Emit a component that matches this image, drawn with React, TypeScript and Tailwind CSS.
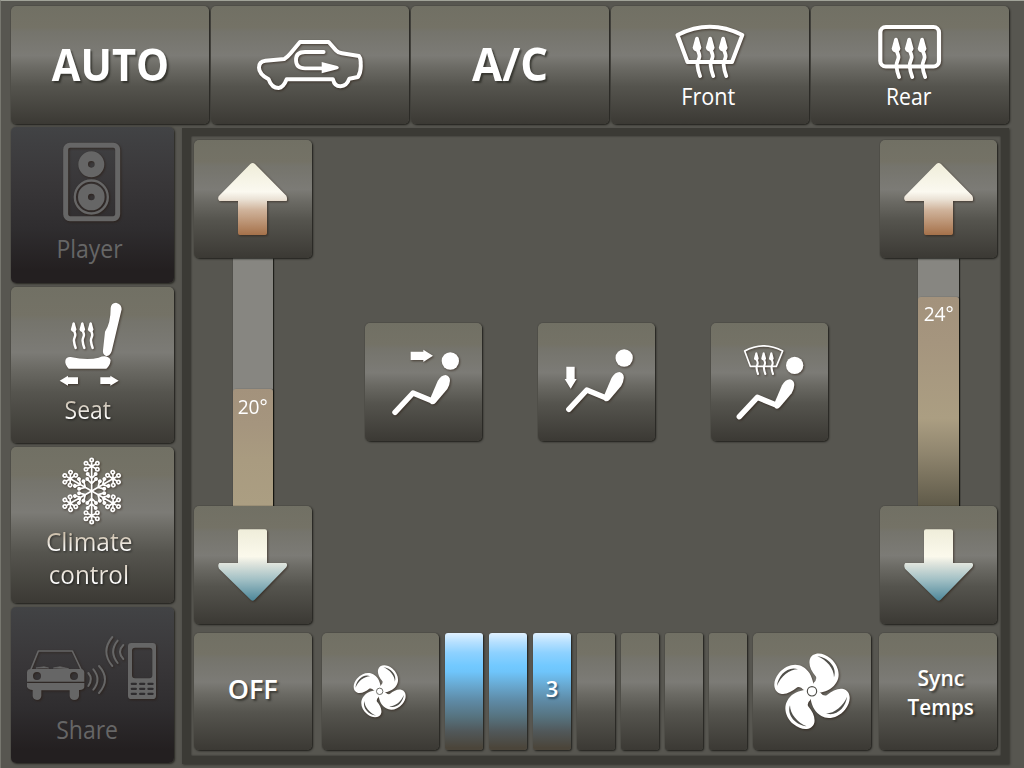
import React from "react";
import { clsx } from "clsx";

const FACE =
  "bg-[linear-gradient(180deg,#717064_0%,#747266_18%,#75746c_22%,#7c7b76_42%,#6a6963_53%,#55544e_68%,#3b3934_100%)] shadow-[1px_1px_2px_rgba(20,20,16,0.85),0_0_1px_rgba(30,30,26,0.5)]";
const DARK_FACE =
  "bg-[linear-gradient(180deg,#424345_0%,#393739_35%,#2f2d2f_65%,#231f20_92%)] shadow-[1px_1px_2px_rgba(20,20,16,0.7),0_0_1px_rgba(30,30,26,0.5)]";
const ICON_SHADOW = "drop-shadow-[1.5px_1.5px_1px_rgba(40,25,15,0.6)]";

type BtnProps = { className: string; face?: string; children?: React.ReactNode };

function Btn({ className, face = FACE, children }: BtnProps) {
  return (
    <button type="button" className={clsx("flex shrink-0 flex-col items-start justify-start rounded-[5px]", face, className)}>
      {children}
    </button>
  );
}

type IconProps = { box: string; className: string; children: React.ReactNode };

function Icon({ box, className, children }: IconProps) {
  return (
    <svg viewBox={box} className={clsx("block shrink-0 overflow-visible", ICON_SHADOW, className)} fill="currentColor">
      {children}
    </svg>
  );
}

function Label({ className, children }: { className: string; children: React.ReactNode }) {
  return <span className={clsx("block w-full text-center whitespace-nowrap", className)}>{children}</span>;
}

function HeatArrow({ x, y, s = 1 }: { x: number; y: number; s?: number }) {
  return (
    <g transform={`translate(${x} ${y}) scale(${s})`}>
      <path d="M0 0c-1.700 0-1.900 1.600-2.300 3.400l-2.100 7.600c.8 2.600 2 3.600 4.400 3.600s3.600-1 4.400-3.600l-2.100-7.600C1.900 1.600 1.700 0 0 0z" />
      <path
        d="M0.300 12c.8 3 2.300 4.800 2.200 7.600s-2.400 5.200-2.100 8.600 1.300 7.600 2.700 11.200"
        fill="none"
        stroke="currentColor"
        strokeWidth="3.800"
        strokeLinecap="round"
      />
    </g>
  );
}

function Person({ x, y }: { x: number; y: number }) {
  return (
    <g transform={`translate(${x} ${y})`}>
      <circle cx="271" cy="153" r="26" />
      <path d="M105 307L159 249L217 273" fill="none" stroke="currentColor" strokeWidth="16.500" strokeLinecap="round" strokeLinejoin="round" />
      <path d="M210 267L233 213Q243 195 257 195Q270 198 270 212Q269 226 262 237L227 278Q220 286 212 281Z" />
    </g>
  );
}

function Fan({ box, className, transform }: { box: string; className: string; transform: string }) {
  return (
    <Icon box={box} className={className}>
      <g transform={transform}>
        {[0, 90, 180, 270].map((a) => (
          <g key={a} transform={`rotate(${a})`}>
            <path d="M0 0L5 -26Q15 -34 12 -44C-3 -62 -10 -78 -7 -94C-1 -117 30 -120 55 -99C80 -78 86 -48 74 -28C64 -10 48 -1 24 4Z" />
            <path d="M16 -105C48 -102 77 -72 66 -42C66 -68 44 -94 16 -105Z" fill="#504f4a" />
          </g>
        ))}
        <circle r="24" />
        <circle r="14" fill="none" stroke="#504f4a" strokeWidth="3.500" />
      </g>
    </Icon>
  );
}

function UpArrow() {
  return (
    <Icon box="108 120 222 234" className="ml-[22px] mt-[19.500px] h-[78px] w-[74px]">
      <defs>
        <linearGradient id="warm" gradientUnits="userSpaceOnUse" x1="0" x2="0" y1="129" y2="345">
          <stop offset="0" stopColor="#efedd9" />
          <stop offset="0.400" stopColor="#fbf9f0" />
          <stop offset="0.500" stopColor="#ebe3d7" />
          <stop offset="0.650" stopColor="#d0b49c" />
          <stop offset="1" stopColor="#a5714a" />
        </linearGradient>
      </defs>
      <path fill="url(#warm)" d="M211 132Q218 126 225 132L319 227Q323 236 320 243H261V340Q261 345 256 345H179Q174 345 174 340V243H118Q112 238 116 229Z" />
    </Icon>
  );
}

function DownArrow() {
  return (
    <Icon box="108 441 222 234" className="ml-[22px] mt-[20.500px] h-[78px] w-[74px]">
      <defs>
        <linearGradient id="cold" gradientUnits="userSpaceOnUse" x1="0" x2="0" y1="448" y2="663">
          <stop offset="0" stopColor="#efedda" />
          <stop offset="0.380" stopColor="#fbf9ec" />
          <stop offset="0.480" stopColor="#dfe4dd" />
          <stop offset="0.700" stopColor="#a2c0c5" />
          <stop offset="1" stopColor="#4c8699" />
        </linearGradient>
      </defs>
      <path fill="url(#cold)" d="M174 454Q174 448 180 448H255Q261 448 261 454V549H318Q324 553 319 562L224 659Q218 665 212 659L117 566Q112 556 118 549H174Z" />
    </Icon>
  );
}

function TempColumn({ value, fill }: { value: string; fill: string }) {
  return (
    <div className="flex w-[117.500px] flex-col">
      <Btn className="relative z-10 h-[117.500px] w-full">
        <UpArrow />
      </Btn>
      <div className="ml-[38.500px] flex h-[248.500px] w-[40.500px] flex-col justify-end bg-[#878681] shadow-[1px_1px_1px_rgba(15,15,10,0.75),0_0_1px_rgba(30,30,26,0.5)]">
        <div className={clsx("rounded-t-[3px] shadow-[1px_0_1px_rgba(15,15,10,0.6)]", fill)}>
          <Label className="text-[20px] leading-[24px]">
            <span className="inline-block scale-x-[0.960]">{value}</span>
          </Label>
        </div>
      </div>
      <Btn className="relative z-10 h-[117.500px] w-full">
        <DownArrow />
      </Btn>
    </div>
  );
}

function SpeedBar({ lit, label }: { lit: boolean; label?: string }) {
  return (
    <div
      className={clsx(
        "h-[117.500px] w-[38px] shrink-0 rounded-[3px]",
        lit
          ? "bg-[linear-gradient(180deg,#e0f1ff_0%,#b5e0ff_8%,#8dd1ff_17%,#72c9ff_28%,#6fc5fb_33%,#68a8d0_45%,#5e8aa5_58%,#56727e_72%,#51585a_84%,#4b453a_98%)] shadow-[1px_1px_2px_rgba(20,20,16,0.85)]"
          : FACE
      )}
    >
      {label && (
        <Label className="pt-[41.500px] text-[22px] leading-[28px] font-semibold [text-shadow:1.5px_1.5px_2px_rgba(20,40,60,0.6)]">
          {label}
        </Label>
      )}
    </div>
  );
}

const SNOW_ARM = (
  <>
    <path d="M0 0V-86M0 -74L-13 -81M0 -74L13 -81M0 -74L-13 -67M0 -74L13 -67M0 -38L-12 -50M0 -38L12 -50M0 -22L-15 -37M0 -22L15 -37" fill="none" stroke="currentColor" strokeWidth="5" />
    <g fill="none" stroke="currentColor" strokeWidth="5">
      <circle cy="-93" r="5" />
      <circle cx="-17" cy="-83" r="5" />
      <circle cx="17" cy="-83" r="5" />
      <circle cx="-17" cy="-65" r="5" />
      <circle cx="17" cy="-65" r="5" />
    </g>
    <circle cy="-74" r="5" />
    <circle cx="-12" cy="-51" r="6" />
    <circle cx="12" cy="-51" r="6" />
    <circle cx="-13" cy="-36" r="6" />
    <circle cx="13" cy="-36" r="6" />
  </>
);

const TINTED =
  "bg-clip-text text-transparent [filter:drop-shadow(1px_1px_1px_rgba(0,0,0,0.55))]";

export default function App() {
  return (
    <div className="flex h-[768px] w-[1024px] flex-col overflow-hidden border-t border-l border-t-[#a1a399] border-l-[#77776f] bg-[#575650] font-['Open_Sans','Noto_Sans',sans-serif] text-white">
      <header className="ml-[10px] mt-[5px] flex gap-[2px]">
        <Btn className="h-[118px] w-[198px]">
          <Label className="mt-[33.500px] text-[45px] leading-[48px] font-bold [text-shadow:2px_2px_2px_rgba(30,30,25,0.65)]">
            <span className="inline-block scale-x-[0.925]">AUTO</span>
          </Label>
        </Btn>
        <Btn className="h-[118px] w-[198px]">
          <Icon box="765 114 330 168" className="ml-[44px] mt-[32px] h-[56px] w-[110px]">
            <path
              d="M777 203Q777 184 796 182L853 177Q862 172 872 160L900 126H986L1008 151Q1014 158 1026 160L1077 168Q1083 175 1082 190Q1084 215 1074 231L1048 236Q1040 258 1022 259Q1004 260 999 238H860Q850 263 836 264Q815 264 806 238Q777 222 777 203Z"
              fill="none"
              stroke="currentColor"
              strokeWidth="12"
              strokeLinejoin="round"
            />
            <path d="M971 156H915C895 156 888 166 888 180C888 198 899 205 915 205H968" fill="none" stroke="currentColor" strokeWidth="11.500" strokeLinecap="round" />
            <path d="M965 186L1012 198Q1021 203 1012 208L965 220Z" />
          </Icon>
        </Btn>
        <Btn className="h-[118px] w-[198px]">
          <Label className="mt-[33px] text-[46px] leading-[48px] font-bold [text-shadow:2px_2px_2px_rgba(30,30,25,0.65)]">
            <span className="inline-block scale-x-[0.950]">A/C</span>
          </Label>
        </Btn>
        <Btn className="h-[118px] w-[198px]">
          <Icon box="670 22 80 60" className="ml-[59px] mt-[16px] h-[60px] w-[80px]">
            <path d="M687.500 62L677.500 35Q709.800 18.500 742.300 35L732 62Z" fill="none" stroke="currentColor" strokeWidth="4" strokeLinejoin="round" />
            <HeatArrow x={697} y={36.7} />
            <HeatArrow x={710.2} y={36.7} />
            <HeatArrow x={723.2} y={36.7} />
          </Icon>
          <Label className="mt-[-0.200px] text-[23px] leading-[28px]">
            <span className="inline-block -translate-x-[1.500px] scale-x-[0.940]">Front</span>
          </Label>
        </Btn>
        <Btn className="h-[118px] w-[198px]">
          <Icon box="870 22 80 60" className="ml-[59px] mt-[16px] h-[60px] w-[80px]">
            <rect x="880.300" y="27" width="58.700" height="39.500" rx="5.500" fill="none" stroke="currentColor" strokeWidth="4.200" />
            <HeatArrow x={896} y={37.7} />
            <HeatArrow x={909.2} y={37.7} />
            <HeatArrow x={922.1} y={37.7} />
          </Icon>
          <Label className="mt-[-0.200px] text-[23px] leading-[28px]">
            <span className="inline-block -translate-x-[1px] scale-x-[0.920]">Rear</span>
          </Label>
        </Btn>
      </header>

      <main className="ml-[10px] mt-[3px] flex">
        <nav className="flex w-[163px] flex-col gap-[4px]">
          <Btn face={DARK_FACE} className="h-[156px] w-[163px] text-[#666]">
            <Icon box="186 60 180 252" className="ml-[51px] mt-[13px] h-[84px] w-[60px]">
              <rect x="197" y="76" width="156" height="220" rx="13" fill="none" stroke="currentColor" strokeWidth="15" />
              <circle cx="274" cy="133" r="24.500" fill="none" stroke="currentColor" strokeWidth="29" />
              <circle cx="274" cy="231" r="25" fill="none" stroke="currentColor" strokeWidth="30" />
              <circle cx="274" cy="231" r="49.500" fill="none" stroke="currentColor" strokeWidth="7" />
            </Icon>
            <Label className="mt-[7.500px] text-[25px] leading-[32px]">
              <span className="inline-block -translate-x-[2.500px] scale-x-[0.920]">Player</span>
            </Label>
          </Btn>
          <Btn className="h-[156px] w-[163px]">
            <Icon box="174 60 198 264" className="ml-[47px] mt-[13px] h-[88px] w-[66px]">
              <path d="M332 84Q333 69 348 68Q365 72 365 88L335 214Q330 229 318 228Q307 224 309 210L315 155Q332 130 332 84Z" />
              <path d="M196 242Q198 230 212 231Q262 242 296 233Q322 222 332 240Q331 256 319 266H206Q194 252 196 242Z" />
              <HeatArrow x={221} y={127} s={1.95} />
              <HeatArrow x={247} y={127} s={1.95} />
              <HeatArrow x={272} y={127} s={1.95} />
              <path d="M179 302L204 287V292H234V312H204V317ZM356 302L331 287V292H301V312H331V317Z" />
            </Icon>
            <Label className="mt-[4.500px] text-[25px] leading-[32px]">
              <span className={clsx("inline-block -translate-x-[4.500px] scale-x-[0.920] bg-[linear-gradient(180deg,#cfc6b8_35%,#fff_80%)]", TINTED)}>
                Seat
              </span>
            </Label>
          </Btn>
          <Btn className="h-[156px] w-[163px]">
            <Icon box="180 48 192 210" className="ml-[49px] mt-[9px] h-[70px] w-[64px]">
              <g transform="translate(275 153)">
                {[0, 60, 120, 180, 240, 300].map((a) => (
                  <g key={a} transform={`rotate(${a})`}>{SNOW_ARM}</g>
                ))}
              </g>
            </Icon>
            <Label className="mt-[-1px] text-[25px] leading-[32.500px]">
              <span className={clsx("inline-block -translate-x-[3px] scale-x-[0.980] bg-[linear-gradient(180deg,#cfc2ae_30%,#fff_78%)]", TINTED)}>Climate</span>
            </Label>
            <Label className="text-[25px] leading-[32.500px]">
              <span className={clsx("inline-block -translate-x-[3.500px] scale-x-[0.970] bg-[linear-gradient(180deg,#dcd2c3_30%,#fff_78%)]", TINTED)}>control</span>
            </Label>
          </Btn>
          <Btn face={DARK_FACE} className="h-[156px] w-[163px] text-[#666]">
            <Icon box="78 102 396 204" className="ml-[15px] mt-[27px] h-[68px] w-[132px]">
              <path d="M92 210L115 153H217L244 210" fill="none" stroke="currentColor" strokeWidth="5" strokeLinejoin="round" />
              <path d="M108 204L146 204L132 200ZM160 204L206 206L180 200Z" stroke="currentColor" strokeWidth="2" />
              <path
                fillRule="evenodd"
                d="M81 217Q82 207 92 207H243Q252 208 253 217V245H81ZM99 228a12 12 0 1 0 24 0a12 12 0 1 0-24 0M210 228a12 12 0 1 0 24 0a12 12 0 1 0-24 0"
              />
              <path d="M81 249H253V262Q250 270 240 270H237V288Q235 300 223 300Q211 300 209 288V271H124V288Q122 300 111 300Q99 299 98 288V270Q84 268 81 260Z" />
              <g fill="none" stroke="currentColor" strokeWidth="6" strokeLinecap="round">
                <path d="M265 219Q280 237 265 258M280 208Q305 238 280 269M297 198Q333 238 297 279" />
                <path d="M370 135Q350 155 370 177M353 122Q326 155 353 189M337 111Q301 155 337 198" />
              </g>
              <path
                fillRule="evenodd"
                d="M394 129H458Q468 129 468 139V287Q468 297 458 297H394Q384 297 384 287V139Q384 129 394 129ZM405 143Q396 143 396 152V226Q396 235 405 235H448Q457 235 457 226V152Q457 143 448 143Z"
              />
              <g fill="#2f2d2f">
                {[248, 263, 278].map((y) =>
                  [392, 417, 442].map((x) => <rect key={`${x}-${y}`} x={x} y={y} width="19" height="7" rx="3.500" />)
                )}
              </g>
            </Icon>
            <Label className="mt-[10.500px] text-[25px] leading-[32px]">
              <span className="inline-block -translate-x-[5.500px] scale-x-[0.920]">Share</span>
            </Label>
          </Btn>
        </nav>

        <section className="ml-[8px] mt-[0.500px] flex h-[636px] w-[827px] flex-col border-8 border-l-9 border-[#3b3a35] pt-[4.500px] pl-[3px] shadow-[1px_1px_2px_rgba(20,20,16,0.5),inset_0_0_2px_rgba(0,0,0,0.6)]">
          <div className="flex h-[483.500px] items-start">
            <TempColumn value="20°" fill="h-[117.500px] pt-[6.500px] bg-[linear-gradient(180deg,#a3927c_0%,#a5957e_30%,#a99b80_60%,#ab9e82_100%)]" />
            <div className="ml-[53px] mt-[183px] flex gap-[55.500px]">
              <Btn className="h-[117.500px] w-[117.500px]">
                <Icon box="90 111 216 213" className="ml-[25.500px] mt-[23.500px] h-[71px] w-[72px]">
                  <Person x={0} y={0} />
                  <path d="M152 125H190V119L219 137L190 156V150H152Z" />
                </Icon>
              </Btn>
              <Btn className="h-[117.500px] w-[117.500px]">
                <Icon box="612 102 216 210" className="ml-[26.500px] mt-[20.500px] h-[70px] w-[72px]">
                  <Person x={521.5} y={-9} />
                  <path d="M619 170H644V207H650L632 236L614 207H619Z" />
                </Icon>
              </Btn>
              <Btn className="h-[117.500px] w-[117.500px]">
                <Icon box="1128 96 210 240" className="ml-[25.500px] mt-[18.500px] h-[80px] w-[70px]">
                  <Person x={1033} y={13} />
                  <path d="M1171 169L1154 123Q1211 92 1268 123L1249 169Z" fill="none" stroke="currentColor" strokeWidth="5" strokeLinejoin="round" />
                  <HeatArrow x={1189} y={127} s={1.65} />
                  <HeatArrow x={1211} y={127} s={1.65} />
                  <HeatArrow x={1234} y={127} s={1.65} />
                </Icon>
              </Btn>
            </div>
            <div className="ml-[51.500px]">
              <TempColumn value="24°" fill="h-[209.500px] pt-[5.500px] bg-[linear-gradient(180deg,#a3927c_0%,#a5957e_22%,#ab9e82_58%,#8f856e_75%,#5f5a49_100%)]" />
            </div>
          </div>
          <div className="mt-[9px] flex">
            <Btn className="h-[117.500px] w-[117.500px]">
              <Label className="mt-[40px] text-[27px] leading-[32px] font-semibold [text-shadow:2px_2px_2px_rgba(30,30,25,0.6)]">
                <span className="inline-block">OFF</span>
              </Label>
            </Btn>
            <Btn className="ml-[10px] h-[117.500px] w-[117.500px]">
              <Fan box="516 132 165 165" className="ml-[30.500px] mt-[31px] h-[55px] w-[55px]" transform="translate(599 214) scale(0.690)" />
            </Btn>
            <div className="ml-[6px] flex gap-[6px]">
              <SpeedBar lit />
              <SpeedBar lit />
              <SpeedBar lit label="3" />
              <SpeedBar lit={false} />
              <SpeedBar lit={false} />
              <SpeedBar lit={false} />
              <SpeedBar lit={false} />
            </div>
            <Btn className="ml-[6px] h-[117.500px] w-[117.500px]">
              <Fan box="606 93 240 240" className="ml-[18.500px] mt-[18px] h-[80px] w-[80px]" transform="translate(726 214)" />
            </Btn>
            <Btn className="ml-[8.500px] h-[117.500px] w-[117.500px]">
              <Label className="mt-[30.500px] text-[22px] leading-[28.500px] font-semibold [text-shadow:2px_2px_2px_rgba(30,30,25,0.6)]">
                <span className="inline-block translate-x-[3.500px] scale-x-[0.960]">Sync</span>
              </Label>
              <Label className="text-[22px] leading-[28.500px] font-semibold [text-shadow:2px_2px_2px_rgba(30,30,25,0.6)]">
                <span className="inline-block translate-x-[3.500px] scale-x-[0.940]">Temps</span>
              </Label>
            </Btn>
          </div>
        </section>
      </main>
    </div>
  );
}
